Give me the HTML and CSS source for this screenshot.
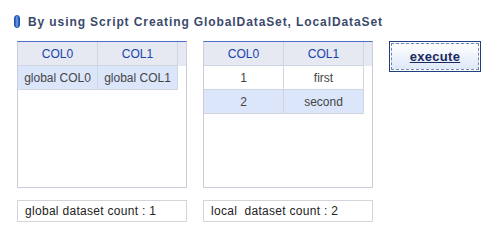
FILE: index.html
```html
<!DOCTYPE html>
<html lang="en">
<head>
    <meta charset="UTF-8">
    <title>Script DataSet</title>
    <link rel="stylesheet" href="styles.css">
</head>
<body>
    <div class="page">
        <!-- Title -->
        <div class="title">
            <span class="title-icon"></span>
            <span>By using Script Creating GlobalDataSet, LocalDataSet</span>
        </div>

        <div class="main">
            <!-- Global dataset -->
            <div class="panel">
                <div class="grid">
                    <div class="row head">
                        <div class="cell">COL0</div>
                        <div class="cell">COL1</div>
                    </div>
                    <div class="row selected">
                        <div class="cell">global COL0</div>
                        <div class="cell">global COL1</div>
                    </div>
                </div>
                <div class="count">global dataset count : 1</div>
            </div>

            <!-- Local dataset -->
            <div class="panel">
                <div class="grid">
                    <div class="row head">
                        <div class="cell">COL0</div>
                        <div class="cell">COL1</div>
                    </div>
                    <div class="row">
                        <div class="cell">1</div>
                        <div class="cell">first</div>
                    </div>
                    <div class="row selected">
                        <div class="cell">2</div>
                        <div class="cell">second</div>
                    </div>
                </div>
                <div class="count">local  dataset count : 2</div>
            </div>

            <button class="execute"><span>execute</span></button>
        </div>
    </div>
</body>
</html>
```

FILE: styles.css
```css
body {
    margin: 0;
    padding: 0;
    background: #fff;
    font-family: "Liberation Sans", Arial, sans-serif;
    font-size: 12px;
}

.page {
    padding: 15px 0 0 14px;
}

/* Title */
.title {
    display: flex;
    align-items: center;
    gap: 8px;
    height: 13px;
    font-weight: bold;
    font-size: 12px;
    letter-spacing: 0.9px;
    color: #3b4a6b;
}

.title-icon {
    width: 6px;
    height: 13px;
    border-radius: 3px;
    background: linear-gradient(to right, #1f58c0, #6fa4ec 50%, #1a4cae);
    border: 1px solid #2050a8;
    box-sizing: border-box;
}

.main {
    display: flex;
    align-items: flex-start;
    gap: 16px;
    margin: 13px 0 0 3px;
}

.panel {
    display: flex;
    flex-direction: column;
    gap: 12px;
}

/* Grid */
.grid {
    width: 170px;
    height: 147px;
    box-sizing: border-box;
    border: 1px solid #ccccdb;
    border-top-color: #4b6ec6;
}

.row {
    display: flex;
    height: 24px;
}

.row.head {
    background: #e6e9f2;
}

.cell {
    width: 80px;
    box-sizing: border-box;
    border-right: 1px solid #d0d5e2;
    border-bottom: 1px solid #d0d5e2;
    display: flex;
    align-items: center;
    justify-content: center;
    color: #454545;
}

.head .cell {
    color: #2041b0;
}

.row.selected .cell {
    background: #dce6fa;
}

/* Count box */
.count {
    width: 170px;
    height: 22px;
    box-sizing: border-box;
    border: 1px solid #d4d4da;
    padding-left: 7px;
    display: flex;
    align-items: center;
    white-space: pre;
    letter-spacing: 0.3px;
    color: #222;
}

/* Button */
.execute {
    width: 92px;
    height: 31px;
    padding: 1px;
    border: 1px solid #1f3f7e;
    background: #fff;
    cursor: pointer;
}

.execute span {
    display: flex;
    align-items: center;
    justify-content: center;
    height: 100%;
    box-sizing: border-box;
    border: 1px dashed #7588ad;
    background: linear-gradient(#ffffff, #dde8f8);
    font-family: "Liberation Sans", Arial, sans-serif;
    font-weight: bold;
    font-size: 13px;
    letter-spacing: 0.3px;
    color: #1b2a5c;
    text-decoration: underline;
}
```
